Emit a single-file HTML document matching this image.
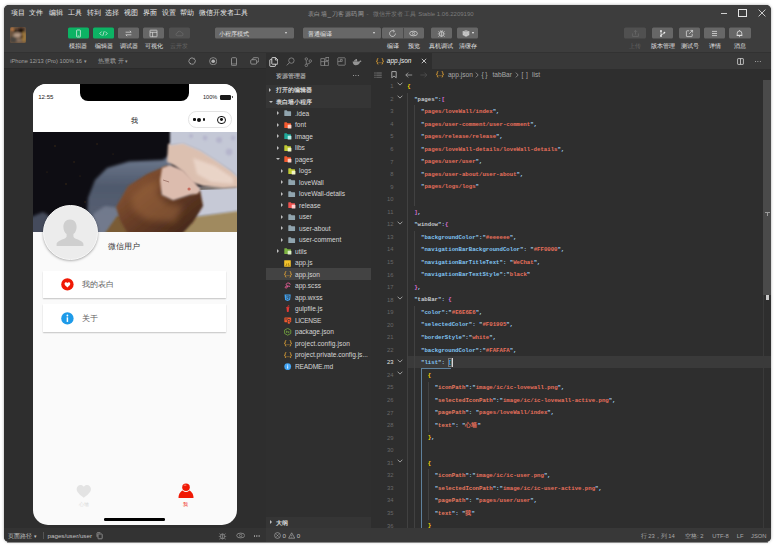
<!DOCTYPE html>
<html><head><meta charset="utf-8"><title>app.json</title>
<style>
*{box-sizing:border-box;margin:0;padding:0}
html,body{width:775px;height:548px;overflow:hidden;background:#fff}
body{font-family:"Liberation Sans",sans-serif;position:relative;color:#ccc}
.abs{position:absolute}
.t{position:absolute;white-space:nowrap;line-height:1}
#win{position:absolute;left:4px;top:5px;width:767px;height:537px;background:#2e2e2e;border-radius:5px;overflow:hidden;box-shadow:0 0 3px rgba(0,0,0,.35)}
#top{position:absolute;left:0;top:0;width:767px;height:47px;background:#3d3d3d}
.menu{position:absolute;top:4px;font-size:6.8px;color:#e9e9e9;white-space:nowrap;line-height:8px}
.btn{position:absolute;top:22px;height:11.2px;width:21.2px;border-radius:1.5px;background:#676767;transform:translateY(0.5px)}
.btn.g{background:#0cb364}
.btn.d{background:#505050}
.lbl{position:absolute;top:37.2px;font-size:6.4px;line-height:8px;color:#e6e6e6;white-space:nowrap;text-align:center;transform:translateX(-50%)}
.lbl.d{color:#666}
.mono{font-family:"Liberation Mono",monospace}
.ln{position:absolute;left:8.4px;width:14px;text-align:right;font-size:5.8px;line-height:7px;color:#686868;white-space:nowrap}
.ln.cur{color:#e4e4e4}
.cl{position:absolute;font-family:"Liberation Mono",monospace;font-size:5.7px;line-height:7px;white-space:pre;font-weight:bold}
.cl i{font-style:normal}
.q{color:#a6d8fa}.s{color:#e8705c}.k1{color:#c6cacd}.k2{color:#80c4f4}.k3{color:#ea7a60}.b1{color:#ffd700}.b2{color:#da70d6}.b3{color:#179fff}
</style></head>
<body>
<div id="win">
<div id="top">
<div class="menu" style="left:6.8px">项目</div>
<div class="menu" style="left:25.4px">文件</div>
<div class="menu" style="left:44.5px">编辑</div>
<div class="menu" style="left:63.6px">工具</div>
<div class="menu" style="left:82.5px">转到</div>
<div class="menu" style="left:101.3px">选择</div>
<div class="menu" style="left:120.1px">视图</div>
<div class="menu" style="left:138.7px">界面</div>
<div class="menu" style="left:157.5px">设置</div>
<div class="menu" style="left:176.4px">帮助</div>
<div class="menu" style="left:195.3px">微信开发者工具</div>
<div class="t" style="left:303.9px;top:4.5px;font-size:6.3px;letter-spacing:0.55px;line-height:8px;color:#a0a0a0">表白墙_刀客源码网</div><div class="t" style="left:362.6px;top:4.5px;font-size:6.2px;letter-spacing:0.2px;line-height:8px;color:#7c7c7c">-&nbsp; 微信开发者工具</div><div class="t" style="left:414.2px;top:4.7px;font-size:6px;line-height:8px;color:#7c7c7c">Stable 1.06.2209190</div>
<div class="abs" style="left:716.8px;top:7.6px;width:6.2px;height:1px;background:#d0d0d0"></div>
<div class="abs" style="left:734.2px;top:3.6px;width:9px;height:8.8px;border:1px solid #e4e4e4"></div>
<svg class="abs" style="left:753.6px;top:4.4px" width="8" height="8" viewBox="0 0 8 8"><path d="M0.6 0.6L7.4 7.4M7.4 0.6L0.6 7.4" stroke="#d8d8d8" stroke-width="0.9" fill="none"/></svg>
<svg class="abs" style="left:6px;top:21.8px;border-radius:1.6px" width="16.4" height="16.4" viewBox="0 0 16.4 16.4"><defs><filter id="ab" x="-30%" y="-30%" width="160%" height="160%"><feGaussianBlur stdDeviation="0.9"/></filter></defs><rect width="16.4" height="16.4" fill="#6a533f"/><g filter="url(#ab)"><ellipse cx="11" cy="3.6" rx="3.2" ry="2.6" fill="#22160f"/><ellipse cx="5.4" cy="3.8" rx="1.8" ry="1.6" fill="#2c2018"/><ellipse cx="2.2" cy="2.2" rx="1.3" ry="1.6" fill="#e08a44"/><ellipse cx="7.6" cy="8.2" rx="4.2" ry="2.2" fill="#b39a86"/><ellipse cx="14" cy="10" rx="2.4" ry="5.4" fill="#a07a3c"/><ellipse cx="3.2" cy="12.6" rx="3.4" ry="3.2" fill="#4a4440"/><ellipse cx="9" cy="13.4" rx="2.6" ry="1.6" fill="#8a7464"/><ellipse cx="11.6" cy="9.6" rx="1.3" ry="2" fill="#3a2418"/></g></svg>
<div class="btn g" style="left:63.6px"></div><div class="lbl " style="left:74.2px">模拟器</div>
<div class="btn g" style="left:88.9px"></div><div class="lbl " style="left:99.5px">编辑器</div>
<div class="btn " style="left:113.9px"></div><div class="lbl " style="left:124.5px">调试器</div>
<div class="btn " style="left:139.2px"></div><div class="lbl " style="left:149.8px">可视化</div>
<div class="btn d" style="left:164.5px"></div><div class="lbl d" style="left:175.1px">云开发</div>
<div class="btn" style="left:210.7px;width:79.2px"></div><div class="t" style="left:214.8px;top:24.6px;font-size:6.4px;line-height:8px;color:#e0e0e0">小程序模式</div><div class="abs" style="left:281.3px;top:27.3px;width:0;height:0;border-left:1.6px solid transparent;border-right:1.6px solid transparent;border-top:2px solid #e0e0e0"></div>
<div class="btn" style="left:299px;width:78.3px"></div><div class="t" style="left:303.6px;top:24.6px;font-size:6.4px;line-height:8px;color:#e0e0e0">普通编译</div><div class="abs" style="left:368.6px;top:27.3px;width:0;height:0;border-left:1.6px solid transparent;border-right:1.6px solid transparent;border-top:2px solid #e0e0e0"></div>
<div class="btn" style="left:378.1px;width:41.9px"></div><div class="abs" style="left:398.8px;top:22.5px;width:0.6px;height:11.2px;background:#4c4c4c"></div>
<div class="lbl" style="left:388.7px">编译</div><div class="lbl" style="left:409.7px">预览</div>
<div class="btn" style="left:426.5px"></div><div class="lbl" style="left:437.1px">真机调试</div>
<div class="btn" style="left:453.3px"></div><div class="lbl" style="left:463.9px">清缓存</div>
<div class="btn d" style="left:620.4px"></div><div class="lbl d" style="left:631.0px">上传</div>
<div class="btn " style="left:647.9px"></div><div class="lbl " style="left:658.5px">版本管理</div>
<div class="btn " style="left:675.0px"></div><div class="lbl " style="left:685.6px">测试号</div>
<div class="btn " style="left:700.1px"></div><div class="lbl " style="left:710.7px">详情</div>
<div class="btn " style="left:725.4px"></div><div class="lbl " style="left:736.0px">消息</div>
<svg class="abs" style="left:69.7px;top:23.7px" width="9" height="9" viewBox="0 0 9 9"><rect x="2.6" y="1" width="3.8" height="7" rx="0.6" stroke="#f4f4f4" stroke-width="0.7" fill="none"/><path d="M3.8 6.8H5.2" stroke="#f4f4f4" stroke-width="0.5"/></svg>
<svg class="abs" style="left:94.9px;top:23.7px" width="9" height="9" viewBox="0 0 9 9"><path d="M2.6 2.6L0.8 4.5L2.6 6.4M6.4 2.6L8.2 4.5L6.4 6.4M5.2 2.2L3.8 6.8" stroke="#f4f4f4" stroke-width="0.7" fill="none"/></svg>
<svg class="abs" style="left:120.0px;top:23.7px" width="9" height="9" viewBox="0 0 9 9"><path d="M1.6 3.2H7.2M5.8 1.8L7.2 3.2M7.4 5.8H1.8M3.2 7.2L1.8 5.8" stroke="#e2e2e2" stroke-width="0.7" fill="none"/></svg>
<svg class="abs" style="left:145.3px;top:23.7px" width="9" height="9" viewBox="0 0 9 9"><rect x="1" y="1.2" width="7" height="6.6" rx="0.5" stroke="#e2e2e2" stroke-width="0.7" fill="none"/><path d="M1 3.3H8M3.6 3.3V7.8" stroke="#e2e2e2" stroke-width="0.7"/></svg>
<svg class="abs" style="left:170.6px;top:23.7px" width="9" height="9" viewBox="0 0 9 9"><path d="M2.6 6.8Q1 6.8 1 5.4Q1 4.2 2.3 4Q2.6 2.2 4.4 2.2Q6 2.2 6.5 3.6Q8 3.7 8 5.2Q8 6.8 6.6 6.8Z" stroke="#6c6c6c" stroke-width="0.7" fill="none"/></svg>
<svg class="abs" style="left:384.0px;top:23.7px" width="9" height="9" viewBox="0 0 9 9"><path d="M7.4 4.5A2.9 2.9 0 1 1 6.2 2.2" stroke="#e2e2e2" stroke-width="0.7" fill="none"/><path d="M5.2 0.8L6.6 2.2L5.2 3.2" stroke="#e2e2e2" stroke-width="0.6" fill="none"/></svg>
<svg class="abs" style="left:405.1px;top:23.7px" width="9" height="9" viewBox="0 0 9 9"><ellipse cx="4.5" cy="4.5" rx="3.9" ry="2.3" stroke="#e2e2e2" stroke-width="0.7" fill="none"/><circle cx="4.5" cy="4.5" r="1.15" stroke="#e2e2e2" stroke-width="0.6" fill="none"/></svg>
<svg class="abs" style="left:432.5px;top:23.7px" width="9" height="9" viewBox="0 0 9 9"><ellipse cx="4.5" cy="4.9" rx="1.9" ry="2.6" stroke="#e2e2e2" stroke-width="0.7" fill="none"/><path d="M4.5 2.4V7.4M3.4 1.4L4 2.3M5.6 1.4L5 2.3M0.8 4.9H2.5M6.5 4.9H8.2M1.3 2.5L2.8 3.5M7.7 2.5L6.2 3.5M1.3 7.6L2.8 6.4M7.7 7.6L6.2 6.4" stroke="#e2e2e2" stroke-width="0.6" fill="none"/></svg>
<svg class="abs" style="left:457.6px;top:23.8px" width="8" height="8.8" viewBox="0 0 8 8.8"><path d="M4 0.9L7.3 2.5V6.3L4 7.9L0.7 6.3V2.5Z" fill="#e2e2e2" opacity=".55"/><path d="M0.7 2.5L4 4.1L7.3 2.5M0.7 3.8L4 5.4L7.3 3.8M0.7 5.1L4 6.7L7.3 5.1" stroke="#e2e2e2" stroke-width="0.6" fill="none"/></svg>
<div class="abs" style="left:468px;top:27.4px;width:0;height:0;border-left:1.6px solid transparent;border-right:1.6px solid transparent;border-top:2.1px solid #f4f4f4"></div>
<svg class="abs" style="left:626.6px;top:23.7px" width="9" height="9" viewBox="0 0 9 9"><path d="M4.5 5.6V1.4M2.9 2.9L4.5 1.3L6.1 2.9M1.6 4.4V7.4H7.4V4.4" stroke="#6c6c6c" stroke-width="0.7" fill="none"/></svg>
<svg class="abs" style="left:653.8px;top:23.7px" width="9" height="9" viewBox="0 0 9 9"><circle cx="3" cy="2" r="0.9" fill="#f4f4f4"/><circle cx="3" cy="7" r="0.9" fill="#f4f4f4"/><circle cx="6.4" cy="3.6" r="0.9" fill="#f4f4f4"/><path d="M3 2V7M6.4 3.6Q6.2 5.2 3 5.6" stroke="#f4f4f4" stroke-width="0.7" fill="none"/></svg>
<svg class="abs" style="left:680.9px;top:23.7px" width="9" height="9" viewBox="0 0 9 9"><path d="M4.2 1.8H2Q1.4 1.8 1.4 2.4V7Q1.4 7.6 2 7.6H6.6Q7.2 7.6 7.2 7V4.8" stroke="#e2e2e2" stroke-width="0.7" fill="none"/><path d="M5.4 1.4H7.6V3.6M7.6 1.4L4.2 4.8" stroke="#e2e2e2" stroke-width="0.7" fill="none"/></svg>
<svg class="abs" style="left:706.0px;top:23.7px" width="9" height="9" viewBox="0 0 9 9"><path d="M2 2.4H7M2 4.5H7M2 6.6H7" stroke="#e2e2e2" stroke-width="0.75"/></svg>
<svg class="abs" style="left:731.1px;top:23.7px" width="9" height="9" viewBox="0 0 9 9"><path d="M2.2 6.4V4.2Q2.2 2 4.5 2Q6.8 2 6.8 4.2V6.4ZM1.6 6.4H7.4M4 7.6H5M4.5 1.2V2" stroke="#f4f4f4" stroke-width="0.7" fill="none"/></svg>
</div>
<div class="abs" style="left:0;top:47px;width:767px;height:1px;background:#323232"></div>
<div class="abs" id="simbar" style="left:0;top:48px;width:261.5px;height:16px;background:#363636;border-bottom:0.6px solid #2a2a2a">
<div class="t" style="left:6.2px;top:5px;font-size:5.7px;line-height:7px;color:#a0a0a0">iPhone 12/13 (Pro) 100% 16 <span style="font-size:4.5px">&#9662;</span></div>
<div class="t" style="left:94px;top:5px;font-size:5.8px;line-height:7px;color:#a0a0a0">热重载 开 <span style="font-size:4.5px">&#9662;</span></div>
<svg class="abs" style="left:184.1px;top:4.2px" width="8.2" height="8.2" viewBox="0 0 8.2 8.2"><circle cx="4.1" cy="4.1" r="3.2" stroke="#a6a6a6" stroke-width="0.75" fill="none" stroke-dasharray="8.6 1.45" transform="rotate(-55 4.1 4.1)"/><path d="M6.1 0.5L6.5 2.1L4.9 2.3ZM2.1 7.7L1.7 6.1L3.3 5.9Z" fill="#a6a6a6"/></svg>
<svg class="abs" style="left:204.7px;top:4.1px" width="8.4" height="8.4" viewBox="0 0 8.4 8.4"><circle cx="4.2" cy="4.2" r="3.6" stroke="#a6a6a6" stroke-width="0.7" fill="none"/><circle cx="4.2" cy="4.2" r="1.8" fill="#b4b4b4"/></svg>
<svg class="abs" style="left:226px;top:3.8px" width="8" height="9.4" viewBox="0 0 8 9.4"><rect x="1.5" y="0.7" width="5" height="8" rx="1" stroke="#a6a6a6" stroke-width="0.75" fill="none"/><path d="M1.6 7H6.4" stroke="#a6a6a6" stroke-width="0.6"/></svg>
<svg class="abs" style="left:245.8px;top:4.2px" width="9.4" height="8" viewBox="0 0 9.4 8"><rect x="2.8" y="0.7" width="6" height="4.4" rx="1.1" stroke="#a6a6a6" stroke-width="0.75" fill="none"/><rect x="0.7" y="2.7" width="6" height="4.4" rx="1.1" stroke="#a6a6a6" stroke-width="0.75" fill="#363636"/></svg>
</div>
<div class="abs" id="sim" style="left:0;top:65px;width:261.5px;height:457.6px;background:#2e2e2e;overflow:hidden">
<div class="abs" id="phone" style="left:28.8px;top:13.9px;width:204.1px;height:441.5px;background:#fafafa;border-radius:13px 13px 15px 15px;overflow:hidden">
<div class="abs" style="left:0;top:0;width:204.1px;height:48.3px;background:#fff"></div>
<div class="abs" style="left:46.8px;top:-4px;width:109.8px;height:21px;background:#000;border-radius:0 0 8px 8px"></div>
<div class="t" style="left:5.4px;top:9.4px;font-size:6.1px;line-height:7px;color:#222">12:55</div>
<div class="t" style="left:170.2px;top:10.3px;font-size:5.6px;line-height:7px;color:#222">100%</div>
<div class="abs" style="left:187px;top:11.3px;width:11.6px;height:4.4px;background:#1a1a1a;border-radius:1.3px"></div><div class="abs" style="left:198.9px;top:12.6px;width:0.9px;height:1.8px;background:#1a1a1a;border-radius:0 1px 1px 0"></div>
<div class="t" style="left:98px;top:33px;font-size:6.8px;line-height:8px;color:#222">我</div>
<div class="abs" style="left:155.2px;top:27.4px;width:44px;height:16.4px;border:0.6px solid #e3e3e3;border-radius:8.2px;background:#fff"></div>
<div class="abs" style="left:160.6px;top:34.6px;width:2.2px;height:2.2px;border-radius:50%;background:#111"></div><div class="abs" style="left:164.6px;top:33.7px;width:4px;height:4px;border-radius:50%;background:#111"></div><div class="abs" style="left:170.4px;top:34.6px;width:2.2px;height:2.2px;border-radius:50%;background:#111"></div>
<div class="abs" style="left:184.6px;top:31.7px;width:8.2px;height:8.2px;border-radius:50%;border:1.3px solid #111"></div><div class="abs" style="left:187.3px;top:34.4px;width:2.8px;height:2.8px;border-radius:50%;background:#111"></div>
<svg class="abs" style="left:0;top:48.2px" width="204.1" height="100" viewBox="0 0 204 100" preserveAspectRatio="none"><defs><filter id="b4" x="-30%" y="-30%" width="160%" height="160%"><feGaussianBlur stdDeviation="3"/></filter><filter id="b2" x="-30%" y="-30%" width="160%" height="160%"><feGaussianBlur stdDeviation="1.6"/></filter><filter id="b1" x="-30%" y="-30%" width="160%" height="160%"><feGaussianBlur stdDeviation="0.8"/></filter><linearGradient id="hg" x1="0" y1="0" x2="1" y2="1"><stop offset="0" stop-color="#94603a"/><stop offset="0.45" stop-color="#6c4028"/><stop offset="1" stop-color="#3c2216"/></linearGradient><linearGradient id="vg" x1="0" y1="0" x2="0" y2="1"><stop offset="0" stop-color="#6f7b90"/><stop offset="0.4" stop-color="#4f596c"/><stop offset="1" stop-color="#5a6275"/></linearGradient><clipPath id="pc"><rect x="0" y="0" width="204" height="100"/></clipPath></defs><g clip-path="url(#pc)"><rect width="204" height="100" fill="#0e0d13"/><g fill="#4a3418" opacity=".8"><circle cx="22" cy="14" r="0.8"/><circle cx="41" cy="30" r="0.7"/><circle cx="64" cy="12" r="0.7"/><circle cx="33" cy="52" r="0.8"/><circle cx="52" cy="70" r="0.7"/><circle cx="80" cy="22" r="0.6"/><circle cx="14" cy="40" r="0.6"/><circle cx="47" cy="44" r="0.6"/></g><path d="M53 104 L55 66 L62 48 L74 36 L96 29.5 L130 28 L138 22 L138 36 L115 44 L98 56 L90 76 L92 90 L84 104 Z" fill="url(#vg)" filter="url(#b2)"/><path d="M58 104 L60 82 L72 74 L86 76 L88 88 L80 104 Z" fill="#777f92" filter="url(#b2)" opacity=".85"/><path d="M-4 86 L10 80 L20 86 L14 104 L-4 104 Z" fill="#454b5c" filter="url(#b2)"/><path d="M70 104 L84 84 L98 86 L110 104 Z" fill="#7a5c34" filter="url(#b1)"/><path d="M144 104 L160 84 L206 77 L206 104 Z" fill="#a08a5e" filter="url(#b1)"/><path d="M160 56 L206 52 L206 79 L161 85 L166 74 Z" fill="#c6c9d6" filter="url(#b1)"/><path d="M166 57 L204 54" stroke="#4a3c30" stroke-width="2" filter="url(#b1)"/><path d="M135 12 L150 9 L168 17 L184 27 L199 38 L206 44 L206 55 L190 56 L170 54 L158 50 L150 40 L142 34 L134 30 Z" fill="#dcc0b0" filter="url(#b1)"/><path d="M160 26 L182 34 L200 46 L200 52 L178 50 L164 42 Z" fill="#ecd8cc" filter="url(#b2)" opacity=".85"/><path d="M137 -3 L206 -3 L206 47 L198 39.5 L182 28.5 L167 19 L150 11.7 L137 13.5 Z" fill="#c4c8d6" filter="url(#b1)"/><g fill="#a9a6c4" opacity=".55" filter="url(#b1)"><circle cx="186" cy="8" r="3"/><circle cx="196" cy="20" r="3.4"/><circle cx="172" cy="6" r="2.4"/><circle cx="158" cy="4" r="2"/><circle cx="200" cy="6" r="2.4"/></g><path d="M83 75 L95 54 L114 42 L135 33 L132 48 L128 62 L140 68 L157 63 L167 58 L170 74 L160 90 L147 104 L96 104 L87 88 Z" fill="url(#hg)" filter="url(#b1)"/><path d="M98 64 L112 52 L126 48 L124 62 L134 72 L150 74 L142 90 L114 88 L100 78 Z" fill="#a06a40" filter="url(#b4)" opacity=".5"/><path d="M129 36 L137 33 L150 38 L160 48 L167 57 L165 61.5 L157 63 L140 68.5 L128.5 63 L127 48 Z" fill="#dcbcae" filter="url(#b1)"/><circle cx="156" cy="57" r="1.6" fill="#c0584a" opacity=".8"/><path d="M130 48 L136 50" stroke="#7a4a40" stroke-width="0.8" opacity=".7"/></g></svg>
<div class="abs" style="left:10.2px;top:121.2px;width:54.8px;height:54.8px;border-radius:50%;background:#ececec;border:1.4px solid #f8f8f8;box-shadow:0 0.8px 2.5px rgba(0,0,0,.35);overflow:hidden"><svg class="abs" style="left:0;top:0" width="52" height="52" viewBox="0 0 52 52"><path d="M26 13.5c4.2 0 6.6 3.2 6.6 7.4 0 3.2-1.4 5.8-3.2 7.2v2.2c0 1 .8 1.8 2.4 2.4 3.6 1.4 7.6 2.8 7.6 5.4v2H12.6v-2c0-2.6 4-4 7.6-5.4 1.6-.6 2.4-1.4 2.4-2.4v-2.2c-1.8-1.4-3.2-4-3.2-7.2 0-4.2 2.4-7.4 6.6-7.4z" fill="#cfcfcf"/></svg></div>
<div class="t" style="left:75.4px;top:158.2px;font-size:8.2px;line-height:9px;color:#333">微信用户</div>
<div class="abs" style="left:10.2px;top:187.0px;width:183.3px;height:27.3px;background:#fff;box-shadow:0 0.5px 1.2px rgba(0,0,0,.22)"></div>
<div class="abs" style="left:10.2px;top:220.2px;width:183.3px;height:27.7px;background:#fff;box-shadow:0 0.5px 1.2px rgba(0,0,0,.22)"></div>
<svg class="abs" style="left:28.7px;top:194.1px" width="12.8" height="12.8" viewBox="0 0 24 24"><circle cx="12" cy="12" r="11.6" fill="#f01905"/><path d="M12 17.6c-3.4-2.4-5.4-4.4-5.4-6.6 0-1.7 1.3-2.9 2.9-2.9 1 0 1.9.5 2.5 1.3.6-.8 1.5-1.3 2.5-1.3 1.6 0 2.9 1.2 2.9 2.9 0 2.2-2 4.2-5.4 6.6z" fill="#fff"/></svg>
<div class="t" style="left:49.7px;top:197.3px;font-size:7.6px;line-height:8px;color:#5c5c5c">我的表白</div>
<svg class="abs" style="left:28.7px;top:228.4px" width="12.8" height="12.8" viewBox="0 0 24 24"><circle cx="12" cy="12" r="11.6" fill="#1e9be9"/><rect x="10.6" y="10" width="2.8" height="8.6" fill="#fff"/><circle cx="12" cy="6.6" r="1.7" fill="#fff"/></svg>
<div class="t" style="left:49.7px;top:230.8px;font-size:7.6px;line-height:8px;color:#5c5c5c">关于</div>
<svg class="abs" style="left:43px;top:400.2px" width="15.6" height="14.4" viewBox="0 0 24 22"><path d="M12 21C5.5 16.2 1 12.4 1 7.6 1 4 3.7 1.3 7 1.3c2 0 3.8 1 5 2.7 1.2-1.7 3-2.7 5-2.7 3.3 0 6 2.7 6 6.300000000000001 0 4.8-4.5 8.6-11 13.4z" fill="#e3e3e3"/></svg>
<div class="t" style="left:50.8px;top:417.4px;font-size:5.2px;line-height:6px;color:#d8d8d8;transform:translateX(-50%)">心墙</div>
<svg class="abs" style="left:144.9px;top:399.2px" width="16" height="15.4" viewBox="0 0 25 24"><path d="M0.8 23.2C0.8 15.6 5.6 10.6 12.5 10.6C19.4 10.6 24.2 15.6 24.2 23.2C24.2 23.7 23.8 24 23.4 24H1.6C1.2 24 0.8 23.7 0.8 23.2Z" fill="#f01905"/><circle cx="12.5" cy="7.2" r="6.9" fill="#fafafa"/><circle cx="12.5" cy="6.6" r="5.9" fill="#f01905"/><ellipse cx="11" cy="3.6" rx="2.4" ry="1.2" fill="#ff8a78" opacity=".75"/></svg>
<div class="t" style="left:152.9px;top:417.4px;font-size:5.2px;line-height:6px;color:#f01905;transform:translateX(-50%)">我</div>
<div class="abs" style="left:71.7px;top:434.4px;width:60.7px;height:2.4px;border-radius:1.2px;background:#000"></div>
</div>
</div>
<div class="abs" id="simfoot" style="left:0;top:522.6px;width:261.5px;height:14.4px;background:#333">
<div class="t" style="left:3.8px;top:4.5px;font-size:6.2px;line-height:7px;color:#c2c2c2">页面路径 <span style="font-size:4.5px">&#9662;</span></div>
<div class="abs" style="left:39px;top:4.5px;width:0.6px;height:7px;background:#555"></div>
<div class="t" style="left:43.6px;top:4.5px;font-size:6.2px;line-height:7px;color:#c2c2c2">pages/user/user</div>
<svg class="abs" style="left:91.6px;top:4.7px" width="7" height="7.4" viewBox="0 0 7 7.4"><rect x="2" y="2" width="4.2" height="4.8" rx="0.5" stroke="#aaa" stroke-width="0.7" fill="none"/><path d="M1 4.8V1.2Q1 0.7 1.5 0.7H4.4" stroke="#aaa" stroke-width="0.7" fill="none"/></svg>
<svg class="abs" style="left:214px;top:4.5px" width="9" height="8" viewBox="0 0 9 8"><ellipse cx="4.5" cy="4.4" rx="1.9" ry="2.6" stroke="#a0a0a0" stroke-width="0.7" fill="none"/><path d="M4.5 2v4.8M0.8 4.4h1.8M6.4 4.4h1.8M1.4 1.6l1.4 1.2M7.6 1.6l-1.4 1.2M1.4 7.2l1.4-1.2M7.6 7.2l-1.4-1.2" stroke="#a0a0a0" stroke-width="0.6" fill="none"/></svg>
<svg class="abs" style="left:231.5px;top:4.9px" width="9.4" height="7" viewBox="0 0 9.4 7"><ellipse cx="4.7" cy="3.5" rx="4" ry="2.4" stroke="#a0a0a0" stroke-width="0.7" fill="none"/><circle cx="4.7" cy="3.5" r="1.2" stroke="#a0a0a0" stroke-width="0.6" fill="none"/></svg>
<div class="abs" style="left:250px;top:7.9px;width:1.1px;height:1.1px;border-radius:50%;background:#a0a0a0;box-shadow:2.3px 0 0 #a0a0a0,4.6px 0 0 #a0a0a0"></div>
</div>
<div class="abs" style="left:261.5px;top:48px;width:0.8px;height:489px;background:#262626"></div>
<div class="abs" id="act" style="left:262.3px;top:48px;width:104.7px;height:17px;background:#2f2f2f">
<svg class="abs" style="left:2.4px;top:3.6px" width="9.6" height="10" viewBox="0 0 9.6 10"><path d="M3.4 0.6H6.6L8.8 2.8V6.6Q8.8 7.2 8.2 7.2H3.4Q2.8 7.2 2.8 6.6V1.2Q2.8 0.6 3.4 0.6Z" stroke="#f2f2f2" stroke-width="0.8" fill="none"/><path d="M6.4 0.8V3H8.6" stroke="#f2f2f2" stroke-width="0.7" fill="none"/><path d="M2.6 2.6H1.4Q0.8 2.6 0.8 3.2V8.8Q0.8 9.4 1.4 9.4H5.8Q6.4 9.4 6.4 8.8V7.4" stroke="#f2f2f2" stroke-width="0.8" fill="none"/></svg>
<svg class="abs" style="left:20.0px;top:4px" width="9" height="9" viewBox="0 0 9 9"><circle cx="5.4" cy="3.6" r="2.7" stroke="#949494" stroke-width="0.75" fill="none"/><path d="M3.5 5.6L0.8 8.4" stroke="#949494" stroke-width="0.8"/></svg>
<svg class="abs" style="left:37.3px;top:3.6px" width="8.4" height="10.4" viewBox="0 0 8.4 10.4"><path d="M2.3 3.2V7.2M6.3 5.2Q6 7 2.6 7.2" stroke="#949494" stroke-width="0.7" fill="none"/><circle cx="2.3" cy="2" r="1.25" stroke="#949494" stroke-width="0.7" fill="#2f2f2f"/><circle cx="2.3" cy="8.4" r="1.25" stroke="#949494" stroke-width="0.7" fill="#2f2f2f"/><circle cx="6.3" cy="4" r="1.25" stroke="#949494" stroke-width="0.7" fill="#2f2f2f"/></svg>
<svg class="abs" style="left:53.6px;top:3.8px" width="9.4" height="9.4" viewBox="0 0 9.4 9.4"><path d="M0.8 4.6H4.6V8.6H0.8ZM4.6 4.6V8.6H8.4V4.6Z M0.8 4.6V1.6H4.6V4.6" stroke="#949494" stroke-width="0.7" fill="none"/><rect x="5.9" y="0.4" width="3" height="3" stroke="#949494" stroke-width="0.7" fill="none"/></svg>
<svg class="abs" style="left:70.6px;top:4px" width="9" height="9" viewBox="0 0 9 9"><rect x="0.8" y="0.8" width="7.4" height="7.4" rx="0.6" stroke="#949494" stroke-width="0.7" fill="none"/><path d="M0.8 4.4H5.2V2.4H3.4V4.4" stroke="#949494" stroke-width="0.7" fill="none"/></svg>
<svg class="abs" style="left:86.1px;top:4.6px" width="10" height="8" viewBox="0 0 10 8"><path d="M0.6 3.6H7.4Q7.6 2.4 8.4 2.2Q8.6 2.9 9.6 3Q9.2 4 8 4.2Q7 7.2 3.6 7.2Q1 7.2 0.6 3.6Z" fill="#949494"/><path d="M2 2.2H5.2V3.4H2ZM3.4 1H5V2.2H3.4Z" fill="#949494"/></svg>
</div>
<div class="abs" id="exp" style="left:262.3px;top:65px;width:104.7px;height:456.6px;background:#2f2f2f;overflow:hidden">
<div class="t" style="left:10.1px;top:1.6px;font-size:6.1px;line-height:7px;color:#e2e2e2">资源管理器</div>
<div class="abs" style="left:86.8px;top:5.2px;width:1.1px;height:1.1px;border-radius:50%;background:#c0c0c0;box-shadow:2.4px 0 0 #c0c0c0,4.8px 0 0 #c0c0c0"></div>
<div class="abs" style="left:0;top:14.5px;width:104.7px;height:11.5px;background:#353535"></div>
<div class="abs" style="left:0;top:26px;width:104.7px;height:11.5px;background:#353535"></div>
<div class="abs" style="left:3.2px;top:18.1px;width:0;height:0;border-top:2px solid transparent;border-bottom:2px solid transparent;border-left:2.8px solid #c0c0c0"></div><div class="t" style="left:10.1px;top:16px;font-size:6.2px;line-height:7px;color:#d6d6d6;font-weight:bold">打开的编辑器</div>
<div class="abs" style="left:2.4px;top:30.7px;width:0;height:0;border-left:2px solid transparent;border-right:2px solid transparent;border-top:2.8px solid #c0c0c0"></div><div class="t" style="left:10.1px;top:27.6px;font-size:6.2px;line-height:7px;color:#d6d6d6;font-weight:bold">表白墙小程序</div>
<div class="abs" style="left:10.4px;top:41.1px;width:0;height:0;border-top:2px solid transparent;border-bottom:2px solid transparent;border-left:2.8px solid #c0c0c0"></div><div class="abs" style="left:17.6px;top:39.5px;width:8px;height:8px;line-height:0;display:flex;align-items:center;justify-content:center"><svg width="7.4" height="6.4" viewBox="0 0 14.8 12.8" style="overflow:visible"><path d="M0.6 1.6Q0.6 0.6 1.6 0.6H5.4L7 2.4H13.2Q14.2 2.4 14.2 3.4V11.2Q14.2 12.2 13.2 12.2H1.6Q0.6 12.2 0.6 11.2Z" fill="#90a4ae"/></svg></div><div class="t" style="left:28.7px;top:39.7px;font-size:6.6px;line-height:8px;color:#d6d6d6;">.idea</div>
<div class="abs" style="left:10.4px;top:52.6px;width:0;height:0;border-top:2px solid transparent;border-bottom:2px solid transparent;border-left:2.8px solid #c0c0c0"></div><div class="abs" style="left:17.6px;top:51.0px;width:8px;height:8px;line-height:0;display:flex;align-items:center;justify-content:center"><svg width="7.4" height="6.4" viewBox="0 0 14.8 12.8" style="overflow:visible"><path d="M0.6 1.6Q0.6 0.6 1.6 0.6H5.4L7 2.4H13.2Q14.2 2.4 14.2 3.4V11.2Q14.2 12.2 13.2 12.2H1.6Q0.6 12.2 0.6 11.2Z" fill="#f4592f"/><rect x="7.4" y="5.6" width="7.4" height="7.4" rx="1.2" fill="#fbd0c4"/></svg></div><div class="t" style="left:28.7px;top:51.2px;font-size:6.6px;line-height:8px;color:#d6d6d6;">font</div>
<div class="abs" style="left:10.4px;top:64.1px;width:0;height:0;border-top:2px solid transparent;border-bottom:2px solid transparent;border-left:2.8px solid #c0c0c0"></div><div class="abs" style="left:17.6px;top:62.5px;width:8px;height:8px;line-height:0;display:flex;align-items:center;justify-content:center"><svg width="7.4" height="6.4" viewBox="0 0 14.8 12.8" style="overflow:visible"><path d="M0.6 1.6Q0.6 0.6 1.6 0.6H5.4L7 2.4H13.2Q14.2 2.4 14.2 3.4V11.2Q14.2 12.2 13.2 12.2H1.6Q0.6 12.2 0.6 11.2Z" fill="#1fa99a"/><rect x="7.4" y="5.6" width="7.4" height="7.4" rx="1.2" fill="#b6ece6"/></svg></div><div class="t" style="left:28.7px;top:62.7px;font-size:6.6px;line-height:8px;color:#d6d6d6;">image</div>
<div class="abs" style="left:10.4px;top:75.6px;width:0;height:0;border-top:2px solid transparent;border-bottom:2px solid transparent;border-left:2.8px solid #c0c0c0"></div><div class="abs" style="left:17.6px;top:74.0px;width:8px;height:8px;line-height:0;display:flex;align-items:center;justify-content:center"><svg width="7.4" height="6.4" viewBox="0 0 14.8 12.8" style="overflow:visible"><path d="M0.6 1.6Q0.6 0.6 1.6 0.6H5.4L7 2.4H13.2Q14.2 2.4 14.2 3.4V11.2Q14.2 12.2 13.2 12.2H1.6Q0.6 12.2 0.6 11.2Z" fill="#c0ca33"/><rect x="7.4" y="5.6" width="7.4" height="7.4" rx="1.2" fill="#f2f5c6"/></svg></div><div class="t" style="left:28.7px;top:74.2px;font-size:6.6px;line-height:8px;color:#d6d6d6;">libs</div>
<div class="abs" style="left:9.6px;top:87.9px;width:0;height:0;border-left:2px solid transparent;border-right:2px solid transparent;border-top:2.8px solid #c0c0c0"></div><div class="abs" style="left:17.6px;top:85.5px;width:8px;height:8px;line-height:0;display:flex;align-items:center;justify-content:center"><svg width="7.4" height="6.4" viewBox="0 0 14.8 12.8" style="overflow:visible"><path d="M0.6 1.6Q0.6 0.6 1.6 0.6H5.4L7 2.4H13.2Q14.2 2.4 14.2 3.4V11.2Q14.2 12.2 13.2 12.2H1.6Q0.6 12.2 0.6 11.2Z" fill="#f4592f"/><rect x="7.4" y="5.6" width="7.4" height="7.4" rx="1.2" fill="#fbd0c4"/></svg></div><div class="t" style="left:28.7px;top:85.7px;font-size:6.6px;line-height:8px;color:#d6d6d6;">pages</div>
<div class="abs" style="left:15.0px;top:98.6px;width:0;height:0;border-top:2px solid transparent;border-bottom:2px solid transparent;border-left:2.8px solid #c0c0c0"></div><div class="abs" style="left:21.4px;top:97.0px;width:8px;height:8px;line-height:0;display:flex;align-items:center;justify-content:center"><svg width="7.4" height="6.4" viewBox="0 0 14.8 12.8" style="overflow:visible"><path d="M0.6 1.6Q0.6 0.6 1.6 0.6H5.4L7 2.4H13.2Q14.2 2.4 14.2 3.4V11.2Q14.2 12.2 13.2 12.2H1.6Q0.6 12.2 0.6 11.2Z" fill="#c0ca33"/><rect x="7.4" y="5.6" width="7.4" height="7.4" rx="1.2" fill="#f2f5c6"/></svg></div><div class="t" style="left:32.8px;top:97.2px;font-size:6.6px;line-height:8px;color:#d6d6d6;">logs</div>
<div class="abs" style="left:15.0px;top:110.1px;width:0;height:0;border-top:2px solid transparent;border-bottom:2px solid transparent;border-left:2.8px solid #c0c0c0"></div><div class="abs" style="left:21.4px;top:108.5px;width:8px;height:8px;line-height:0;display:flex;align-items:center;justify-content:center"><svg width="7.4" height="6.4" viewBox="0 0 14.8 12.8" style="overflow:visible"><path d="M0.6 1.6Q0.6 0.6 1.6 0.6H5.4L7 2.4H13.2Q14.2 2.4 14.2 3.4V11.2Q14.2 12.2 13.2 12.2H1.6Q0.6 12.2 0.6 11.2Z" fill="#90a4ae"/></svg></div><div class="t" style="left:32.8px;top:108.7px;font-size:6.6px;line-height:8px;color:#d6d6d6;">loveWall</div>
<div class="abs" style="left:15.0px;top:121.6px;width:0;height:0;border-top:2px solid transparent;border-bottom:2px solid transparent;border-left:2.8px solid #c0c0c0"></div><div class="abs" style="left:21.4px;top:120.0px;width:8px;height:8px;line-height:0;display:flex;align-items:center;justify-content:center"><svg width="7.4" height="6.4" viewBox="0 0 14.8 12.8" style="overflow:visible"><path d="M0.6 1.6Q0.6 0.6 1.6 0.6H5.4L7 2.4H13.2Q14.2 2.4 14.2 3.4V11.2Q14.2 12.2 13.2 12.2H1.6Q0.6 12.2 0.6 11.2Z" fill="#90a4ae"/></svg></div><div class="t" style="left:32.8px;top:120.2px;font-size:6.6px;line-height:8px;color:#d6d6d6;">loveWall-details</div>
<div class="abs" style="left:15.0px;top:133.1px;width:0;height:0;border-top:2px solid transparent;border-bottom:2px solid transparent;border-left:2.8px solid #c0c0c0"></div><div class="abs" style="left:21.4px;top:131.5px;width:8px;height:8px;line-height:0;display:flex;align-items:center;justify-content:center"><svg width="7.4" height="6.4" viewBox="0 0 14.8 12.8" style="overflow:visible"><path d="M0.6 1.6Q0.6 0.6 1.6 0.6H5.4L7 2.4H13.2Q14.2 2.4 14.2 3.4V11.2Q14.2 12.2 13.2 12.2H1.6Q0.6 12.2 0.6 11.2Z" fill="#ef5350"/><rect x="7.4" y="5.6" width="7.4" height="7.4" rx="1.2" fill="#fbd0d0"/></svg></div><div class="t" style="left:32.8px;top:131.7px;font-size:6.6px;line-height:8px;color:#d6d6d6;">release</div>
<div class="abs" style="left:15.0px;top:144.6px;width:0;height:0;border-top:2px solid transparent;border-bottom:2px solid transparent;border-left:2.8px solid #c0c0c0"></div><div class="abs" style="left:21.4px;top:143.0px;width:8px;height:8px;line-height:0;display:flex;align-items:center;justify-content:center"><svg width="7.4" height="6.4" viewBox="0 0 14.8 12.8" style="overflow:visible"><path d="M0.6 1.6Q0.6 0.6 1.6 0.6H5.4L7 2.4H13.2Q14.2 2.4 14.2 3.4V11.2Q14.2 12.2 13.2 12.2H1.6Q0.6 12.2 0.6 11.2Z" fill="#90a4ae"/></svg></div><div class="t" style="left:32.8px;top:143.2px;font-size:6.6px;line-height:8px;color:#d6d6d6;">user</div>
<div class="abs" style="left:15.0px;top:156.1px;width:0;height:0;border-top:2px solid transparent;border-bottom:2px solid transparent;border-left:2.8px solid #c0c0c0"></div><div class="abs" style="left:21.4px;top:154.5px;width:8px;height:8px;line-height:0;display:flex;align-items:center;justify-content:center"><svg width="7.4" height="6.4" viewBox="0 0 14.8 12.8" style="overflow:visible"><path d="M0.6 1.6Q0.6 0.6 1.6 0.6H5.4L7 2.4H13.2Q14.2 2.4 14.2 3.4V11.2Q14.2 12.2 13.2 12.2H1.6Q0.6 12.2 0.6 11.2Z" fill="#90a4ae"/></svg></div><div class="t" style="left:32.8px;top:154.7px;font-size:6.6px;line-height:8px;color:#d6d6d6;">user-about</div>
<div class="abs" style="left:15.0px;top:167.6px;width:0;height:0;border-top:2px solid transparent;border-bottom:2px solid transparent;border-left:2.8px solid #c0c0c0"></div><div class="abs" style="left:21.4px;top:166.0px;width:8px;height:8px;line-height:0;display:flex;align-items:center;justify-content:center"><svg width="7.4" height="6.4" viewBox="0 0 14.8 12.8" style="overflow:visible"><path d="M0.6 1.6Q0.6 0.6 1.6 0.6H5.4L7 2.4H13.2Q14.2 2.4 14.2 3.4V11.2Q14.2 12.2 13.2 12.2H1.6Q0.6 12.2 0.6 11.2Z" fill="#90a4ae"/></svg></div><div class="t" style="left:32.8px;top:166.2px;font-size:6.6px;line-height:8px;color:#d6d6d6;">user-comment</div>
<div class="abs" style="left:10.4px;top:179.1px;width:0;height:0;border-top:2px solid transparent;border-bottom:2px solid transparent;border-left:2.8px solid #c0c0c0"></div><div class="abs" style="left:17.6px;top:177.5px;width:8px;height:8px;line-height:0;display:flex;align-items:center;justify-content:center"><svg width="7.4" height="6.4" viewBox="0 0 14.8 12.8" style="overflow:visible"><path d="M0.6 1.6Q0.6 0.6 1.6 0.6H5.4L7 2.4H13.2Q14.2 2.4 14.2 3.4V11.2Q14.2 12.2 13.2 12.2H1.6Q0.6 12.2 0.6 11.2Z" fill="#7cb342"/><rect x="7.4" y="5.6" width="7.4" height="7.4" rx="1.2" fill="#dcecc6"/></svg></div><div class="t" style="left:28.7px;top:177.7px;font-size:6.6px;line-height:8px;color:#d6d6d6;">utils</div>
<div class="abs" style="left:17.6px;top:189.0px;width:8px;height:8px;line-height:0;display:flex;align-items:center;justify-content:center"><svg width="7" height="7" viewBox="0 0 14 14"><rect x="0.4" y="0.4" width="13.2" height="13.2" rx="1" fill="#f3c22b"/><path d="M5 7v3.6q0 1-1 1t-1-.8M8 10.8q.4.8 1.4.8 1.2 0 1.2-1t-1.300000000000001-1.2-1.2-1.200000000000001 1.1-1q.9 0 1.2.7" stroke="#7a5a08" stroke-width="1.1" fill="none"/></svg></div><div class="t" style="left:28.7px;top:189.2px;font-size:6.6px;line-height:8px;color:#d6d6d6;">app.js</div>
<div class="abs" style="left:0;top:198.4px;width:104.7px;height:11.3px;background:#434343"></div>
<div class="abs" style="left:17.6px;top:200.5px;width:8px;height:8px;line-height:0;display:flex;align-items:center;justify-content:center"><svg width="8" height="6.6" viewBox="0 0 16 13.2"><path d="M4.6 0.8Q2.6 0.8 2.6 2.8V4.6Q2.6 6.4 0.8 6.6Q2.6 6.8 2.6 8.6V10.4Q2.6 12.4 4.6 12.4M11.4 0.8Q13.4 0.8 13.4 2.8V4.6Q13.4 6.4 15.2 6.6Q13.4 6.8 13.4 8.6V10.4Q13.4 12.4 11.4 12.4" stroke="#e8a838" stroke-width="1.7" fill="none"/><circle cx="5.9" cy="9.6" r="0.9" fill="#e8a838"/><circle cx="8" cy="9.6" r="0.9" fill="#e8a838"/><circle cx="10.1" cy="9.6" r="0.9" fill="#e8a838"/></svg></div><div class="t" style="left:28.7px;top:200.7px;font-size:6.6px;line-height:8px;color:#d6d6d6;">app.json</div>
<div class="abs" style="left:17.6px;top:212.0px;width:8px;height:8px;line-height:0;display:flex;align-items:center;justify-content:center"><svg width="7.6" height="7.4" viewBox="0 0 15.2 14.8"><path d="M12.6 4.6C13 1.8 7 0.8 4.6 3.8C3 6 7.6 7.2 7 9.8C6.4 12.6 2.4 12.8 2.4 10.6C2.4 8.6 6.8 7.2 11.4 8.6" stroke="#ec5f9a" stroke-width="1.8" fill="none" stroke-linecap="round"/></svg></div><div class="t" style="left:28.7px;top:212.2px;font-size:6.6px;line-height:8px;color:#d6d6d6;">app.scss</div>
<div class="abs" style="left:17.6px;top:223.5px;width:8px;height:8px;line-height:0;display:flex;align-items:center;justify-content:center"><svg width="7.2" height="7.4" viewBox="0 0 14.4 14.8"><path d="M1 0.8H13.4L12.2 12.2L7.2 14L2.2 12.2Z" fill="#42a5f5"/><path d="M4 3.6H10.6L10.2 6.4H4.6M10 6.4L9.6 10.2L7.2 11L4.8 10.2L4.7 8.8" stroke="#2e2e2e" stroke-width="1.3" fill="none"/></svg></div><div class="t" style="left:28.7px;top:223.7px;font-size:6.6px;line-height:8px;color:#d6d6d6;">app.wxss</div>
<div class="abs" style="left:17.6px;top:235.0px;width:8px;height:8px;line-height:0;display:flex;align-items:center;justify-content:center"><svg width="7" height="7.6" viewBox="0 0 14 15.2"><path d="M5 5.2H10.2L9.4 13.6Q7.6 14.6 5.8 13.6Z" fill="#e53935"/><path d="M7.2 5.2L8.6 1.2L10.8 2" stroke="#e53935" stroke-width="1.5" fill="none"/><path d="M4.4 5.2H10.8" stroke="#e53935" stroke-width="1.6"/></svg></div><div class="t" style="left:28.7px;top:235.2px;font-size:6.6px;line-height:8px;color:#d6d6d6;">gulpfile.js</div>
<div class="abs" style="left:17.6px;top:246.5px;width:8px;height:8px;line-height:0;display:flex;align-items:center;justify-content:center"><svg width="7.6" height="7.2" viewBox="0 0 15.2 14.4"><rect x="0.8" y="0.8" width="13.6" height="9.6" rx="1" fill="#f4592f"/><circle cx="9.6" cy="7.4" r="3.2" fill="#2f2f2f"/><circle cx="9.6" cy="7.4" r="2" fill="#f4592f"/><path d="M7.8 9.6V14L9.6 12.8L11.4 14V9.6Z" fill="#f4592f"/><path d="M2.6 3.4H7.4M2.6 5.6H5.6" stroke="#2f2f2f" stroke-width="1.1"/></svg></div><div class="t" style="left:28.7px;top:246.7px;font-size:6.6px;line-height:8px;color:#d6d6d6;letter-spacing:-0.32px;">LICENSE</div>
<div class="abs" style="left:17.6px;top:258.0px;width:8px;height:8px;line-height:0;display:flex;align-items:center;justify-content:center"><svg width="7.4" height="7.6" viewBox="0 0 14.8 15.2"><path d="M7.4 0.8L13.6 4.2V11L7.4 14.4L1.2 11V4.2Z" stroke="#7cb342" stroke-width="1.5" fill="none"/><path d="M5 9.8V6L9.6 9.8V6" stroke="#7cb342" stroke-width="1.3" fill="none"/></svg></div><div class="t" style="left:28.7px;top:258.2px;font-size:6.6px;line-height:8px;color:#d6d6d6;">package.json</div>
<div class="abs" style="left:17.6px;top:269.5px;width:8px;height:8px;line-height:0;display:flex;align-items:center;justify-content:center"><svg width="8" height="6.6" viewBox="0 0 16 13.2"><path d="M4.6 0.8Q2.6 0.8 2.6 2.8V4.6Q2.6 6.4 0.8 6.6Q2.6 6.8 2.6 8.6V10.4Q2.6 12.4 4.6 12.4M11.4 0.8Q13.4 0.8 13.4 2.8V4.6Q13.4 6.4 15.2 6.6Q13.4 6.8 13.4 8.6V10.4Q13.4 12.4 11.4 12.4" stroke="#e8a838" stroke-width="1.7" fill="none"/><circle cx="5.9" cy="9.6" r="0.9" fill="#e8a838"/><circle cx="8" cy="9.6" r="0.9" fill="#e8a838"/><circle cx="10.1" cy="9.6" r="0.9" fill="#e8a838"/></svg></div><div class="t" style="left:28.7px;top:269.7px;font-size:6.6px;line-height:8px;color:#d6d6d6;letter-spacing:0.1px;">project.config.json</div>
<div class="abs" style="left:17.6px;top:281.0px;width:8px;height:8px;line-height:0;display:flex;align-items:center;justify-content:center"><svg width="8" height="6.6" viewBox="0 0 16 13.2"><path d="M4.6 0.8Q2.6 0.8 2.6 2.8V4.6Q2.6 6.4 0.8 6.6Q2.6 6.8 2.6 8.6V10.4Q2.6 12.4 4.6 12.4M11.4 0.8Q13.4 0.8 13.4 2.8V4.6Q13.4 6.4 15.2 6.6Q13.4 6.8 13.4 8.6V10.4Q13.4 12.4 11.4 12.4" stroke="#e8a838" stroke-width="1.7" fill="none"/><circle cx="5.9" cy="9.6" r="0.9" fill="#e8a838"/><circle cx="8" cy="9.6" r="0.9" fill="#e8a838"/><circle cx="10.1" cy="9.6" r="0.9" fill="#e8a838"/></svg></div><div class="t" style="left:28.7px;top:281.2px;font-size:6.6px;line-height:8px;color:#d6d6d6;">project.private.config.js...</div>
<div class="abs" style="left:17.6px;top:292.5px;width:8px;height:8px;line-height:0;display:flex;align-items:center;justify-content:center"><svg width="7.4" height="7.4" viewBox="0 0 14.8 14.8"><circle cx="7.4" cy="7.4" r="6.8" fill="#42a5f5"/><rect x="6.5" y="6.4" width="1.8" height="4.8" fill="#fff"/><circle cx="7.4" cy="4.2" r="1.1" fill="#fff"/></svg></div><div class="t" style="left:28.7px;top:292.7px;font-size:6.6px;line-height:8px;color:#d6d6d6;letter-spacing:-0.14px;">README.md</div>
</div>
<div class="abs" style="left:262.3px;top:511.6px;width:104.7px;height:11.4px;background:#353535"><div class="abs" style="left:3.3px;top:3.9px;width:0;height:0;border-top:2px solid transparent;border-bottom:2px solid transparent;border-left:2.8px solid #c0c0c0"></div><div class="t" style="left:10px;top:2.4px;font-size:6.2px;line-height:7px;color:#d6d6d6;font-weight:bold">大纲</div></div>
<div class="abs" id="ed" style="left:367.0px;top:48px;width:400.0px;height:475px;background:#2e2e2e;overflow:hidden">
<div class="abs" style="left:0;top:0;width:400px;height:16.2px;background:#383838"></div>
<div class="abs" style="left:0;top:0;width:61.3px;height:16.2px;background:#2e2e2e"></div>
<div class="abs" style="left:5.0px;top:5.0px;line-height:0"><svg width="8" height="6.6" viewBox="0 0 16 13.2"><path d="M4.6 0.8Q2.6 0.8 2.6 2.8V4.6Q2.6 6.4 0.8 6.6Q2.6 6.8 2.6 8.6V10.4Q2.6 12.4 4.6 12.4M11.4 0.8Q13.4 0.8 13.4 2.8V4.6Q13.4 6.4 15.2 6.6Q13.4 6.8 13.4 8.6V10.4Q13.4 12.4 11.4 12.4" stroke="#e8a838" stroke-width="1.7" fill="none"/><circle cx="5.9" cy="9.6" r="0.9" fill="#e8a838"/><circle cx="8" cy="9.6" r="0.9" fill="#e8a838"/><circle cx="10.1" cy="9.6" r="0.9" fill="#e8a838"/></svg></div><div class="t" style="left:15.8px;top:4.0px;font-size:6.5px;line-height:8px;color:#f0f0f0;font-style:italic">app.json</div>
<svg class="abs" style="left:50.2px;top:5.2px" width="6" height="6" viewBox="0 0 6 6"><path d="M0.8 0.8L5.2 5.2M5.2 0.8L0.8 5.2" stroke="#e6e6e6" stroke-width="0.8"/></svg>
<svg class="abs" style="left:365.8px;top:4.8px" width="7" height="7" viewBox="0 0 7 7"><rect x="0.6" y="0.6" width="5.8" height="5.8" rx="0.5" stroke="#d8d8d8" stroke-width="0.8" fill="none"/><path d="M3.5 0.6V6.4" stroke="#d8d8d8" stroke-width="0.8"/></svg>
<div class="abs" style="left:384.2px;top:7.8px;width:1.1px;height:1.1px;border-radius:50%;background:#c0c0c0;box-shadow:2.4px 0 0 #c0c0c0,4.8px 0 0 #c0c0c0"></div>
<svg class="abs" style="left:2.8px;top:18.6px" width="8" height="6.4" viewBox="0 0 8 6.4"><path d="M0.2 0.9H7.8M0.2 3.2H7.8M0.2 5.5H7.8" stroke="#5c5c5c" stroke-width="1.5"/><path d="M2 0V6.4" stroke="#2e2e2e" stroke-width="0.5"/></svg>
<svg class="abs" style="left:19.8px;top:18.0px" width="6" height="7.6" viewBox="0 0 6 7.6"><path d="M0.8 0.6H5.2V6.8L3 5L0.8 6.8Z" stroke="#c4c4c4" stroke-width="0.8" fill="none"/></svg>
<svg class="abs" style="left:34.4px;top:18.7px" width="7.6" height="6" viewBox="0 0 7.6 6"><path d="M7.2 3H0.8M3.2 0.6L0.8 3L3.2 5.4" stroke="#b0b0b0" stroke-width="0.75" fill="none"/></svg>
<svg class="abs" style="left:48.6px;top:18.7px" width="7.6" height="6" viewBox="0 0 7.6 6"><path d="M0.4 3H6.8M4.4 0.6L6.8 3L4.4 5.4" stroke="#555" stroke-width="0.75" fill="none"/></svg>
<div class="abs" style="left:65.4px;top:18.4px;line-height:0"><svg width="8" height="6.6" viewBox="0 0 16 13.2"><path d="M4.6 0.8Q2.6 0.8 2.6 2.8V4.6Q2.6 6.4 0.8 6.6Q2.6 6.8 2.6 8.6V10.4Q2.6 12.4 4.6 12.4M11.4 0.8Q13.4 0.8 13.4 2.8V4.6Q13.4 6.4 15.2 6.6Q13.4 6.8 13.4 8.6V10.4Q13.4 12.4 11.4 12.4" stroke="#e8a838" stroke-width="1.7" fill="none"/><circle cx="5.9" cy="9.6" r="0.9" fill="#e8a838"/><circle cx="8" cy="9.6" r="0.9" fill="#e8a838"/><circle cx="10.1" cy="9.6" r="0.9" fill="#e8a838"/></svg></div><div class="t" style="left:76.9px;top:17.6px;font-size:6.6px;line-height:8px;color:#a8a8a8;">app.json</div><svg class="abs" style="left:103.6px;top:18.7px" width="4" height="6" viewBox="0 0 4 6"><path d="M0.8 0.6L3.2 3L0.8 5.4" stroke="#a8a8a8" stroke-width="0.7" fill="none"/></svg><div class="t" style="left:110.6px;top:17.6px;font-size:6.6px;line-height:8px;color:#a8a8a8;letter-spacing:1.4px">{}</div><div class="t" style="left:121.5px;top:17.6px;font-size:6.6px;line-height:8px;color:#a8a8a8;">tabBar</div><svg class="abs" style="left:143.8px;top:18.7px" width="4" height="6" viewBox="0 0 4 6"><path d="M0.8 0.6L3.2 3L0.8 5.4" stroke="#a8a8a8" stroke-width="0.7" fill="none"/></svg><div class="t" style="left:150.6px;top:17.6px;font-size:6.6px;line-height:8px;color:#a8a8a8;letter-spacing:0.4px">[ ]</div><div class="t" style="left:161.1px;top:17.6px;font-size:6.6px;line-height:8px;color:#a8a8a8;">list</div>
<div class="abs" style="left:36.0px;top:302.9px;width:400px;height:12.2px;background:#3a3a3a"></div>
<div class="abs" style="left:36.10px;top:39.9px;width:0.7px;height:451.8px;background:#414141"></div><div class="abs" style="left:42.94px;top:52.4px;width:0.7px;height:100.4px;background:#414141"></div><div class="abs" style="left:42.94px;top:177.9px;width:0.7px;height:50.2px;background:#414141"></div><div class="abs" style="left:42.94px;top:253.2px;width:0.7px;height:238.5px;background:#414141"></div><div class="abs" style="left:49.78px;top:316.0px;width:0.7px;height:175.7px;background:#5f819c"></div><div class="abs" style="left:49.78px;top:314.5px;width:30.4px;height:0.7px;background:#5f819c"></div><div class="abs" style="left:56.62px;top:328.5px;width:0.7px;height:50.2px;background:#414141"></div><div class="abs" style="left:56.62px;top:416.4px;width:0.7px;height:50.2px;background:#414141"></div>
<svg class="abs" style="left:25.6px;top:29.4px" width="6" height="4" viewBox="0 0 6 4"><path d="M0.6 0.7L3 3.1L5.4 0.7" stroke="#c2c2c2" stroke-width="0.75" fill="none"/></svg><svg class="abs" style="left:25.6px;top:41.9px" width="6" height="4" viewBox="0 0 6 4"><path d="M0.6 0.7L3 3.1L5.4 0.7" stroke="#c2c2c2" stroke-width="0.75" fill="none"/></svg><svg class="abs" style="left:25.6px;top:167.5px" width="6" height="4" viewBox="0 0 6 4"><path d="M0.6 0.7L3 3.1L5.4 0.7" stroke="#c2c2c2" stroke-width="0.75" fill="none"/></svg><svg class="abs" style="left:25.6px;top:242.8px" width="6" height="4" viewBox="0 0 6 4"><path d="M0.6 0.7L3 3.1L5.4 0.7" stroke="#c2c2c2" stroke-width="0.75" fill="none"/></svg><svg class="abs" style="left:25.6px;top:305.5px" width="6" height="4" viewBox="0 0 6 4"><path d="M0.6 0.7L3 3.1L5.4 0.7" stroke="#c2c2c2" stroke-width="0.75" fill="none"/></svg><svg class="abs" style="left:25.6px;top:318.1px" width="6" height="4" viewBox="0 0 6 4"><path d="M0.6 0.7L3 3.1L5.4 0.7" stroke="#c2c2c2" stroke-width="0.75" fill="none"/></svg><svg class="abs" style="left:25.6px;top:405.9px" width="6" height="4" viewBox="0 0 6 4"><path d="M0.6 0.7L3 3.1L5.4 0.7" stroke="#c2c2c2" stroke-width="0.75" fill="none"/></svg>
<div class="ln" style="top:30.2px">1</div><div class="cl" style="left:36.30px;top:30.0px"><i class="b1">{</i></div>
<div class="ln" style="top:42.7px">2</div><div class="cl" style="left:43.14px;top:42.5px"><i class="q">&quot;</i><i class="k1">pages</i><i class="q">&quot;</i><i class="q">:</i><i class="b2">[</i></div>
<div class="ln" style="top:55.3px">3</div><div class="cl" style="left:49.98px;top:55.1px"><i class="q">&quot;</i><i class="s">pages/loveWall/index</i><i class="q">&quot;</i><i class="q">,</i></div>
<div class="ln" style="top:67.8px">4</div><div class="cl" style="left:49.98px;top:67.7px"><i class="q">&quot;</i><i class="s">pages/user-comment/user-comment</i><i class="q">&quot;</i><i class="q">,</i></div>
<div class="ln" style="top:80.4px">5</div><div class="cl" style="left:49.98px;top:80.2px"><i class="q">&quot;</i><i class="s">pages/release/release</i><i class="q">&quot;</i><i class="q">,</i></div>
<div class="ln" style="top:92.9px">6</div><div class="cl" style="left:49.98px;top:92.8px"><i class="q">&quot;</i><i class="s">pages/loveWall-details/loveWall-details</i><i class="q">&quot;</i><i class="q">,</i></div>
<div class="ln" style="top:105.5px">7</div><div class="cl" style="left:49.98px;top:105.3px"><i class="q">&quot;</i><i class="s">pages/user/user</i><i class="q">&quot;</i><i class="q">,</i></div>
<div class="ln" style="top:118.0px">8</div><div class="cl" style="left:49.98px;top:117.8px"><i class="q">&quot;</i><i class="s">pages/user-about/user-about</i><i class="q">&quot;</i><i class="q">,</i></div>
<div class="ln" style="top:130.6px">9</div><div class="cl" style="left:49.98px;top:130.4px"><i class="q">&quot;</i><i class="s">pages/logs/logs</i><i class="q">&quot;</i></div>
<div class="ln" style="top:143.2px">10</div>
<div class="ln" style="top:155.7px">11</div><div class="cl" style="left:43.14px;top:155.5px"><i class="b2">]</i><i class="q">,</i></div>
<div class="ln" style="top:168.2px">12</div><div class="cl" style="left:43.14px;top:168.1px"><i class="q">&quot;</i><i class="k1">window</i><i class="q">&quot;</i><i class="q">:</i><i class="b2">{</i></div>
<div class="ln" style="top:180.8px">13</div><div class="cl" style="left:49.98px;top:180.6px"><i class="q">&quot;</i><i class="k2">backgroundColor</i><i class="q">&quot;</i><i class="q">:</i><i class="q">&quot;</i><i class="s">#eeeeee</i><i class="q">&quot;</i><i class="q">,</i></div>
<div class="ln" style="top:193.3px">14</div><div class="cl" style="left:49.98px;top:193.2px"><i class="q">&quot;</i><i class="k2">navigationBarBackgroundColor</i><i class="q">&quot;</i><i class="q">: </i><i class="q">&quot;</i><i class="s">#FF0000</i><i class="q">&quot;</i><i class="q">,</i></div>
<div class="ln" style="top:205.9px">15</div><div class="cl" style="left:49.98px;top:205.7px"><i class="q">&quot;</i><i class="k2">navigationBarTitleText</i><i class="q">&quot;</i><i class="q">: </i><i class="q">&quot;</i><i class="s">WeChat</i><i class="q">&quot;</i><i class="q">,</i></div>
<div class="ln" style="top:218.5px">16</div><div class="cl" style="left:49.98px;top:218.3px"><i class="q">&quot;</i><i class="k2">navigationBarTextStyle</i><i class="q">&quot;</i><i class="q">:</i><i class="q">&quot;</i><i class="s">black</i><i class="q">&quot;</i></div>
<div class="ln" style="top:231.0px">17</div><div class="cl" style="left:43.14px;top:230.8px"><i class="b2">}</i><i class="q">,</i></div>
<div class="ln" style="top:243.6px">18</div><div class="cl" style="left:43.14px;top:243.4px"><i class="q">&quot;</i><i class="k1">tabBar</i><i class="q">&quot;</i><i class="q">: </i><i class="b2">{</i></div>
<div class="ln" style="top:256.1px">19</div><div class="cl" style="left:49.98px;top:255.9px"><i class="q">&quot;</i><i class="k2">color</i><i class="q">&quot;</i><i class="q">:</i><i class="q">&quot;</i><i class="s">#E6E6E6</i><i class="q">&quot;</i><i class="q">,</i></div>
<div class="ln" style="top:268.7px">20</div><div class="cl" style="left:49.98px;top:268.4px"><i class="q">&quot;</i><i class="k2">selectedColor</i><i class="q">&quot;</i><i class="q">: </i><i class="q">&quot;</i><i class="s">#F01905</i><i class="q">&quot;</i><i class="q">,</i></div>
<div class="ln" style="top:281.2px">21</div><div class="cl" style="left:49.98px;top:281.0px"><i class="q">&quot;</i><i class="k2">borderStyle</i><i class="q">&quot;</i><i class="q">:</i><i class="q">&quot;</i><i class="s">white</i><i class="q">&quot;</i><i class="q">,</i></div>
<div class="ln" style="top:293.8px">22</div><div class="cl" style="left:49.98px;top:293.5px"><i class="q">&quot;</i><i class="k2">backgroundColor</i><i class="q">&quot;</i><i class="q">:</i><i class="q">&quot;</i><i class="s">#FAFAFA</i><i class="q">&quot;</i><i class="q">,</i></div>
<div class="ln cur" style="top:306.3px">23</div><div class="cl" style="left:49.98px;top:306.1px"><i class="q">&quot;</i><i class="k2">list</i><i class="q">&quot;</i><i class="q">: </i><i class="b3">[</i></div>
<div class="ln" style="top:318.9px">24</div><div class="cl" style="left:56.82px;top:318.6px"><i class="b1">{</i></div>
<div class="ln" style="top:331.4px">25</div><div class="cl" style="left:63.66px;top:331.2px"><i class="q">&quot;</i><i class="k3">iconPath</i><i class="q">&quot;</i><i class="q">:</i><i class="q">&quot;</i><i class="s">image/ic/ic-lovewall.png</i><i class="q">&quot;</i><i class="q">,</i></div>
<div class="ln" style="top:344.0px">26</div><div class="cl" style="left:63.66px;top:343.8px"><i class="q">&quot;</i><i class="k3">selectedIconPath</i><i class="q">&quot;</i><i class="q">:</i><i class="q">&quot;</i><i class="s">image/ic/ic-lovewall-active.png</i><i class="q">&quot;</i><i class="q">,</i></div>
<div class="ln" style="top:356.5px">27</div><div class="cl" style="left:63.66px;top:356.3px"><i class="q">&quot;</i><i class="k3">pagePath</i><i class="q">&quot;</i><i class="q">: </i><i class="q">&quot;</i><i class="s">pages/loveWall/index</i><i class="q">&quot;</i><i class="q">,</i></div>
<div class="ln" style="top:369.1px">28</div><div class="cl" style="left:63.66px;top:368.9px"><i class="q">&quot;</i><i class="k3">text</i><i class="q">&quot;</i><i class="q">: </i><i class="q">&quot;</i><i class="s">心墙</i><i class="q">&quot;</i></div>
<div class="ln" style="top:381.6px">29</div><div class="cl" style="left:56.82px;top:381.4px"><i class="b1">}</i><i class="q">,</i></div>
<div class="ln" style="top:394.2px">30</div>
<div class="ln" style="top:406.7px">31</div><div class="cl" style="left:56.82px;top:406.5px"><i class="b1">{</i></div>
<div class="ln" style="top:419.2px">32</div><div class="cl" style="left:63.66px;top:419.0px"><i class="q">&quot;</i><i class="k3">iconPath</i><i class="q">&quot;</i><i class="q">:</i><i class="q">&quot;</i><i class="s">image/ic/ic-user.png</i><i class="q">&quot;</i><i class="q">,</i></div>
<div class="ln" style="top:431.8px">33</div><div class="cl" style="left:63.66px;top:431.6px"><i class="q">&quot;</i><i class="k3">selectedIconPath</i><i class="q">&quot;</i><i class="q">:</i><i class="q">&quot;</i><i class="s">image/ic/ic-user-active.png</i><i class="q">&quot;</i><i class="q">,</i></div>
<div class="ln" style="top:444.4px">34</div><div class="cl" style="left:63.66px;top:444.1px"><i class="q">&quot;</i><i class="k3">pagePath</i><i class="q">&quot;</i><i class="q">: </i><i class="q">&quot;</i><i class="s">pages/user/user</i><i class="q">&quot;</i><i class="q">,</i></div>
<div class="ln" style="top:456.9px">35</div><div class="cl" style="left:63.66px;top:456.7px"><i class="q">&quot;</i><i class="k3">text</i><i class="q">&quot;</i><i class="q">: </i><i class="q">&quot;</i><i class="s">我</i><i class="q">&quot;</i></div>
<div class="ln" style="top:469.5px">36</div><div class="cl" style="left:56.82px;top:469.2px"><i class="b1">}</i></div>
<div class="abs" style="left:81.0px;top:305.1px;width:0.7px;height:9px;background:#d8d8d8"></div>
<div class="abs" style="left:77.0px;top:304.8px;width:4.0px;height:9.6px;border:0.5px solid #777"></div>
<div class="abs" style="left:392.0px;top:27.0px;width:0.6px;height:450px;background:#3a3a3a"></div>
<div class="abs" style="left:392.2px;top:27.0px;width:8px;height:214.7px;background:#4a4a4a"></div>
<div class="abs" style="left:394.4px;top:159.0px;width:4.6px;height:1.2px;background:#9a9a9a"></div><div class="abs" style="left:396.0px;top:159.0px;width:1.4px;height:4px;background:#9a9a9a"></div>
<div class="abs" style="left:395.4px;top:242.0px;width:2.4px;height:5px;background:#c8c8c8"></div>
</div>
<div class="abs" id="status" style="left:262.3px;top:523px;width:504.7px;height:14px;background:#383838">
<svg class="abs" style="left:7.7px;top:3.8px" width="7" height="7" viewBox="0 0 7 7"><circle cx="3.5" cy="3.5" r="2.9" stroke="#b8b8b8" stroke-width="0.6" fill="none"/><path d="M2.4 2.4L4.6 4.6M4.6 2.4L2.4 4.6" stroke="#b8b8b8" stroke-width="0.55"/></svg><div class="t" style="left:16.3px;top:4.2px;font-size:6.2px;line-height:7px;color:#c0c0c0">0</div><svg class="abs" style="left:21.3px;top:3.8px" width="7.4" height="7" viewBox="0 0 7.4 7"><path d="M3.7 0.8L6.8 6.2H0.6Z" stroke="#b8b8b8" stroke-width="0.6" fill="none"/><path d="M3.7 2.8V4.4M3.7 5V5.5" stroke="#b8b8b8" stroke-width="0.55"/></svg><div class="t" style="left:30.5px;top:4.2px;font-size:6.2px;line-height:7px;color:#c0c0c0">0</div>
<div class="t" style="left:374.4px;top:4.5px;font-size:5.8px;line-height:7px;color:#a8a8a8">行 23，列 14</div><div class="t" style="left:418.7px;top:4.5px;font-size:5.8px;line-height:7px;color:#a8a8a8">空格: 2</div><div class="t" style="left:446.0px;top:4.5px;font-size:5.8px;line-height:7px;color:#a8a8a8">UTF-8</div><div class="t" style="left:470.5px;top:4.5px;font-size:5.8px;line-height:7px;color:#a8a8a8">LF</div><div class="t" style="left:484.7px;top:4.5px;font-size:5.8px;line-height:7px;color:#a8a8a8">JSON</div>
</div>
</div>
<div class="abs" style="left:7px;top:542px;width:761px;height:1px;background:rgba(52,52,52,.5)"></div>
</body></html>
